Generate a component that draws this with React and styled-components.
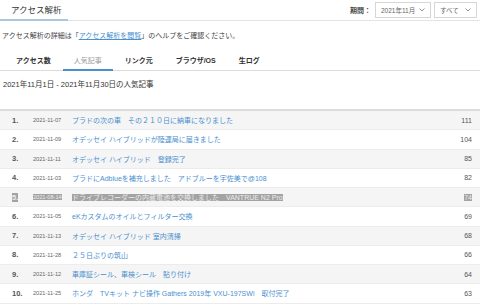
import React from 'react';
import styled, { createGlobalStyle } from 'styled-components';

const rows = [
  { rank: 1, date: '2021-11-07', title: 'プラドの次の車　その２１０日に納車になりました', count: 111 },
  { rank: 2, date: '2021-11-09', title: 'オデッセイ ハイブリッドが陸運局に届きました', count: 104 },
  { rank: 3, date: '2021-11-11', title: 'オデッセイ ハイブリッド　登録完了', count: 85 },
  { rank: 4, date: '2021-11-03', title: 'プラドにAdblueを補充しました　アドブルーを宇佐美で@108', count: 82 },
  { rank: 5, date: '2021-08-14', title: 'ドライブレコーダーの内蔵電池を交換しました　VANTRUE N2 Pro', count: 74, selected: true },
  { rank: 6, date: '2021-11-05', title: 'eKカスタムのオイルとフィルター交換', count: 69 },
  { rank: 7, date: '2021-11-13', title: 'オデッセイ ハイブリッド 室内清掃', count: 68 },
  { rank: 8, date: '2021-11-28', title: '２５日ぶりの筑山', count: 66 },
  { rank: 9, date: '2021-11-12', title: '車庫証シール、車検シール　貼り付け', count: 64 },
  { rank: 10, date: '2021-11-25', title: 'ホンダ　TVキット ナビ操作 Gathers 2019年 VXU-197SWi　取付完了', count: 63 },
];

const tabs = ['アクセス数', '人気記事', 'リンク元', 'ブラウザ/OS', '生ログ'];

const Chevron = () => (
  <svg width="6" height="4" viewBox="0 0 6 4" fill="none">
    <path d="M0.5 0.5 L3 3 L5.5 0.5" stroke="#888" strokeWidth="0.9" />
  </svg>
);

const App = () => {
  return (
    <>
      <Global />
      <Page>
        <Header>
          <Title>アクセス解析</Title>
          <Period>
            <Label>期間：</Label>
            <Select $w={56}>2021年11月<Chevron /></Select>
            <Select $w={43}>すべて<Chevron /></Select>
          </Period>
        </Header>
        <Help>
          アクセス解析の詳細は「<HelpLink>アクセス解析を閲覧</HelpLink>」のヘルプをご確認ください。
        </Help>
        <Tabs>
          {tabs.map((t) => (
            <Tab key={t} $active={t === '人気記事'}>{t}</Tab>
          ))}
        </Tabs>
        <Range>2021年11月1日 - 2021年11月30日の人気記事</Range>
        <Table>
          {rows.map((r) => (
            <Row key={r.rank} $odd={r.rank % 2 === 1}>
              <Rank><Mark $on={r.selected}>{r.rank}.</Mark></Rank>
              <Date><Mark $on={r.selected}>{r.date}</Mark></Date>
              <Article><Mark $on={r.selected}>{r.title}</Mark></Article>
              <Count><Mark $on={r.selected}>{r.count}</Mark></Count>
            </Row>
          ))}
        </Table>
      </Page>
    </>
  );
};

const Global = createGlobalStyle`
  body {
    margin: 0;
    background: #fff;
    font-family: "Liberation Sans", "Noto Sans CJK JP", sans-serif;
    color: #333;
  }
`;

const Page = styled.div`
  width: 480px;
  height: 306px;
  overflow: hidden;
`;

const Header = styled.div`
  display: flex;
  align-items: stretch;
  height: 20px;
  border-bottom: 1px solid #e4e4e4;
`;

const Title = styled.div`
  display: flex;
  align-items: center;
  padding: 0 6px 1px 11px;
  width: 51px;
  font-size: 8.5px;
  font-weight: normal;
  color: #333;
  border-bottom: 2px solid #a9c8d8;
  margin-bottom: -1px;
`;

const Period = styled.div`
  margin-left: auto;
  display: flex;
  align-items: center;
  gap: 3px;
  padding-right: 3px;
`;

const Label = styled.span`
  font-size: 7px;
  font-weight: bold;
  color: #444;
  margin-right: 1px;
`;

const Select = styled.div`
  box-sizing: border-box;
  width: ${(p) => p.$w}px;
  height: 16px;
  border: 1px solid #d6d6d6;
  display: flex;
  align-items: center;
  justify-content: space-between;
  padding: 0 5px;
  font-size: 6.5px;
  color: #666;
`;

const Help = styled.div`
  height: 27px;
  display: flex;
  align-items: center;
  padding-left: 2px;
  font-size: 7px;
  color: #444;
  white-space: nowrap;
`;

const HelpLink = styled.span`
  color: #4a8fcf;
  text-decoration: underline;
`;

const Tabs = styled.div`
  display: flex;
  height: 22px;
  padding-left: 5px;
  border-bottom: 1px solid #dcdcdc;
`;

const Tab = styled.div`
  display: flex;
  align-items: center;
  padding: 2px 11px 0;
  margin-right: 1px;
  font-size: 7px;
  font-weight: ${(p) => (p.$active ? 'normal' : 'bold')};
  color: ${(p) => (p.$active ? '#999' : '#333')};
  border-bottom: 2px solid ${(p) => (p.$active ? '#4a90cf' : 'transparent')};
  margin-bottom: -1px;
`;

const Range = styled.div`
  height: 24px;
  display: flex;
  align-items: center;
  padding-left: 3px;
  font-size: 7.5px;
  color: #333;
  margin-bottom: 14px;
`;

const Table = styled.div`
  border-top: 2px solid #dcdcdc;
`;

const Row = styled.div`
  display: flex;
  align-items: center;
  height: 19.26px;
  box-sizing: border-box;
  border-bottom: 1px solid #ececec;
  background: ${(p) => (p.$odd ? '#f5f5f5' : '#fff')};
  padding: 0 8px 0 12px;
`;

const Mark = styled.span`
  background: ${(p) => (p.$on ? '#a3a3a3' : 'transparent')};
  color: ${(p) => (p.$on ? '#ececec' : 'inherit')};
`;

const Rank = styled.div`
  width: 21px;
  font-size: 7.5px;
  font-weight: bold;
  color: #555;
`;

const Date = styled.div`
  width: 39px;
  font-size: 5.6px;
  color: #666;
`;

const Article = styled.div`
  flex: 1;
  font-size: 7px;
  color: #4a8fcf;
  white-space: nowrap;
  overflow: hidden;
`;

const Count = styled.div`
  font-size: 7px;
  color: #555;
  text-align: right;
`;

export default App;
